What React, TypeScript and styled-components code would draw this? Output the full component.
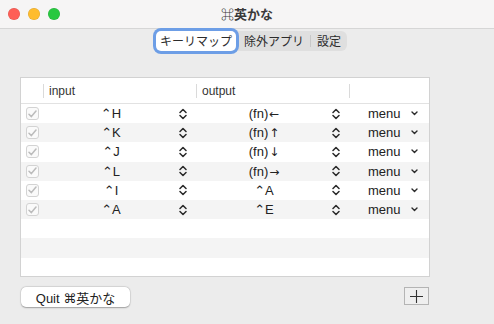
import React from "react";
import styled, { createGlobalStyle } from "styled-components";

const GlobalStyle = createGlobalStyle`
    html, body {
        margin: 0;
        padding: 0;
        background: #ececec;
    }
    body {
        font-family: "Liberation Sans", "DejaVu Sans", "Noto Sans CJK JP", sans-serif;
        color: #222;
    }
`;

type Mapping = { input: string; output: string; arrow?: string };

const mappings: Mapping[] = [
    { input: "⌃H", output: "(fn)", arrow: "←" },
    { input: "⌃K", output: "(fn)", arrow: "↑" },
    { input: "⌃J", output: "(fn)", arrow: "↓" },
    { input: "⌃L", output: "(fn)", arrow: "→" },
    { input: "⌃I", output: "⌃A" },
    { input: "⌃A", output: "⌃E" },
];

const emptyRows = 3;

const Stepper = () => (
    <svg width="8" height="12" viewBox="0 0 8 12">
        <path d="M1 4.5 L4 1.5 L7 4.5 M1 7.5 L4 10.5 L7 7.5" fill="none" stroke="#2a2a2a" strokeWidth="1.5" strokeLinecap="round" strokeLinejoin="round" />
    </svg>
);

const Chevron = () => (
    <svg width="7" height="5" viewBox="0 0 7 5">
        <path d="M1 1 L3.5 3.5 L6 1" fill="none" stroke="#2a2a2a" strokeWidth="1.4" strokeLinecap="round" strokeLinejoin="round" />
    </svg>
);

const Check = () => (
    <svg width="9" height="8" viewBox="0 0 9 8">
        <path d="M1 4.2 L3.4 6.6 L8 1" fill="none" stroke="#bcbcbc" strokeWidth="1.5" strokeLinecap="round" strokeLinejoin="round" />
    </svg>
);

const App = () => {
    return (
        <>
            <GlobalStyle />
            <Window>
                <TitleBar>
                    <Lights>
                        <Light color="#fe5f57" />
                        <Light color="#febc2e" />
                        <Light color="#28c840" />
                    </Lights>
                    <Title>⌘英かな</Title>
                </TitleBar>
                <Content>
                    <Segmented>
                        <Segment selected>キーリマップ</Segment>
                        <Segment>除外アプリ</Segment>
                        <SegDivider />
                        <Segment last>設定</Segment>
                    </Segmented>
                    <Table>
                        <HeaderRow>
                            <HeaderCell />
                            <HeaderCell divider>input</HeaderCell>
                            <HeaderCell divider>output</HeaderCell>
                            <HeaderCell divider />
                        </HeaderRow>
                        {mappings.map((m, i) => (
                            <Row key={i} striped={i % 2 === 1}>
                                <CheckCell>
                                    <CheckBox>
                                        <Check />
                                    </CheckBox>
                                </CheckCell>
                                <PopupCell>
                                    <PopupText>{m.input}</PopupText>
                                    <Stepper />
                                </PopupCell>
                                <PopupCell>
                                    <PopupText>
                                        {m.output}
                                        {m.arrow && <Arrow>{m.arrow}</Arrow>}
                                    </PopupText>
                                    <Stepper />
                                </PopupCell>
                                <MenuCell>
                                    <span>menu</span>
                                    <Chevron />
                                </MenuCell>
                            </Row>
                        ))}
                        {Array.from({ length: emptyRows }).map((_, i) => (
                            <Row key={"e" + i} striped={(mappings.length + i) % 2 === 1} />
                        ))}
                    </Table>
                    <Footer>
                        <QuitButton>Quit ⌘英かな</QuitButton>
                        <PlusButton>
                            <svg width="13" height="13" viewBox="0 0 13 13">
                                <path d="M6.5 0 V13 M0 6.5 H13" stroke="#333" strokeWidth="1.1" />
                            </svg>
                        </PlusButton>
                    </Footer>
                </Content>
            </Window>
        </>
    );
};

export default App;

const Window = styled.div`
    width: 494px;
    height: 324px;
    display: flex;
    flex-direction: column;
    background: #ececec;
    overflow: hidden;
`;

const TitleBar = styled.div`
    position: relative;
    height: 28px;
    flex-shrink: 0;
    background: #f6f5f5;
    border-bottom: 1px solid #d6d6d6;
    display: flex;
    align-items: center;
    justify-content: center;
`;

const Lights = styled.div`
    position: absolute;
    left: 8px;
    top: 8px;
    display: flex;
    gap: 8px;
`;

const Light = styled.div<{ color: string }>`
    width: 12px;
    height: 12px;
    border-radius: 50%;
    background: ${(p) => p.color};
    box-shadow: inset 0 0 0 0.5px rgba(0, 0, 0, 0.12);
`;

const Title = styled.div`
    font-size: 13px;
    font-weight: bold;
    color: #3a3a3a;
    font-family: "Noto Sans CJK JP", "DejaVu Sans", sans-serif;
    margin-top: -2px;
`;

const Content = styled.div`
    display: flex;
    flex-direction: column;
    padding: 2px 64px 0 20px;
`;

const Segmented = styled.div`
    align-self: flex-start;
    margin-left: 136px;
    display: flex;
    align-items: center;
    height: 20px;
    background: #dfdfdf;
    border-radius: 6px;
    font-family: "Noto Sans CJK JP", sans-serif;
    font-size: 12px;
    color: #2c2c2c;
`;

const Segment = styled.div<{ selected?: boolean; last?: boolean }>`
    height: 20px;
    line-height: 20px;
    padding: ${(p) => (p.selected ? "0 4px" : p.last ? "0 6px" : "0 6px 0 8px")};
    border-radius: ${(p) => (p.selected ? "5px" : "0")};
    background: ${(p) => (p.selected ? "#fff" : "transparent")};
    box-shadow: ${(p) => (p.selected ? "0 0 0 3px #6d9ee6" : "none")};
    position: relative;
    z-index: ${(p) => (p.selected ? 1 : 0)};
`;

const SegDivider = styled.div`
    width: 1px;
    height: 12px;
    background: #c8c8c8;
`;

const Table = styled.div`
    margin-top: 26px;
    height: 200px;
    box-sizing: border-box;
    border: 1px solid #d2d2d2;
    background: #fff;
    overflow: hidden;
`;

const columns = "22px 153px 153px 1fr";

const HeaderRow = styled.div`
    display: grid;
    grid-template-columns: ${columns};
    height: 25px;
    border-bottom: 1px solid #e2e2e2;
    font-size: 12px;
    color: #333;
`;

const HeaderCell = styled.div<{ divider?: boolean }>`
    display: flex;
    align-items: center;
    padding-left: 6px;
    position: relative;
    &::before {
        content: "";
        display: ${(p) => (p.divider ? "block" : "none")};
        position: absolute;
        left: 0;
        top: 6px;
        height: 14px;
        width: 1px;
        background: #dadada;
    }
`;

const Row = styled.div<{ striped?: boolean }>`
    display: grid;
    grid-template-columns: ${columns};
    height: 19.2px;
    background: ${(p) => (p.striped ? "#f4f4f4" : "#fff")};
    font-size: 13px;
`;

const CheckCell = styled.div`
    display: flex;
    align-items: center;
    justify-content: center;
    padding-left: 1px;
`;

const CheckBox = styled.div`
    width: 13px;
    height: 13px;
    box-sizing: border-box;
    border: 1px solid #d3d3d3;
    border-radius: 3px;
    background: #fafafa;
    display: flex;
    align-items: center;
    justify-content: center;
`;

const PopupCell = styled.div`
    display: flex;
    align-items: center;
    padding-right: 9px;
`;

const PopupText = styled.span`
    flex: 1;
    text-align: center;
    color: #222;
`;

const Arrow = styled.span`
    font-family: "DejaVu Sans", sans-serif;
    font-size: 12px;
    margin-left: 1px;
`;

const MenuCell = styled.div`
    display: flex;
    align-items: center;
    padding-left: 19px;
    gap: 10px;
    color: #222;
`;

const Footer = styled.div`
    display: flex;
    justify-content: space-between;
    align-items: flex-start;
    margin-top: 10px;
    padding-left: 1px;
    padding-right: 1px;
`;

const QuitButton = styled.button`
    width: 109px;
    height: 20px;
    padding: 0;
    border: none;
    border-radius: 5px;
    background: #fff;
    box-shadow: 0 0.5px 1.5px rgba(0, 0, 0, 0.3), 0 0 0 0.5px rgba(0, 0, 0, 0.08);
    font-family: "Liberation Sans", "DejaVu Sans", "Noto Sans CJK JP", sans-serif;
    font-size: 13px;
    color: #222;
`;

const PlusButton = styled.div`
    width: 25px;
    height: 18px;
    box-sizing: border-box;
    border: 1px solid #b4b4b4;
    background: #efefef;
    display: flex;
    align-items: center;
    justify-content: center;
`;
